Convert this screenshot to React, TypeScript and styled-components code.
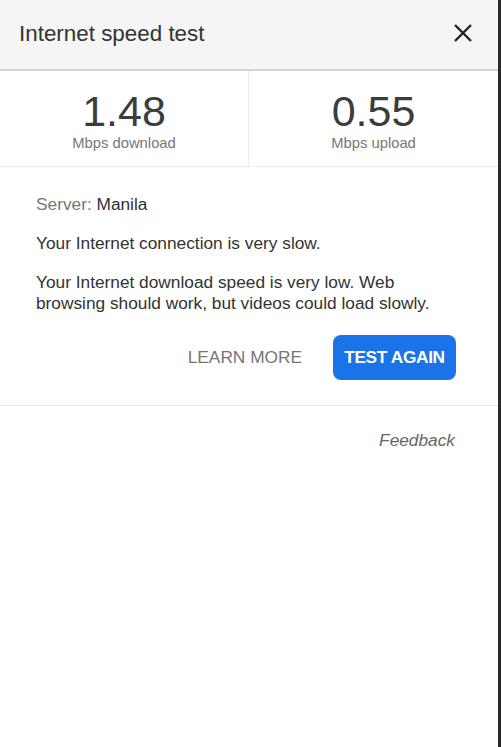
import React from "react";
import styled, { createGlobalStyle } from "styled-components";

const Global = createGlobalStyle`
  html, body { margin: 0; padding: 0; background: #fff; }
  body { font-family: "Liberation Sans", Arial, sans-serif; }
`;

const Frame = styled.div`
  display: flex;
  width: 501px;
  height: 747px;
`;

const Panel = styled.div`
  flex: 1;
  background: #fff;
  display: flex;
  flex-direction: column;
`;

const Edge = styled.div`
  width: 3px;
  background: #2a2a2a;
`;

const Header = styled.div`
  height: 69px;
  background: #f5f5f5;
  border-bottom: 2px solid #d4d4d4;
  display: flex;
  align-items: center;
  justify-content: space-between;
  padding: 0 25px 0 19px;
`;

const Title = styled.div`
  font-size: 22.4px;
  color: #333;
  padding-bottom: 2px;
`;

const Close = styled.button`
  border: none;
  background: none;
  padding: 0;
  width: 20px;
  height: 20px;
  display: flex;
  margin-bottom: 3px;
  cursor: pointer;
`;

const Stats = styled.div`
  display: grid;
  grid-template-columns: 1fr 1fr;
  border-bottom: 1px solid #ebebeb;
  height: 95px;
`;

const Stat = styled.div<{ $divider?: boolean }>`
  display: flex;
  flex-direction: column;
  align-items: center;
  padding-top: 18px;
  border-right: ${(p) => (p.$divider ? "1px solid #ebebeb" : "none")};
`;

const Value = styled.div`
  font-size: 43px;
  line-height: 44px;
  color: #3c3c3c;
`;

const Unit = styled.div`
  font-size: 14.8px;
  color: #777;
  margin-top: 2px;
`;

const Body = styled.div`
  padding: 27px 42px 25px 36px;
  border-bottom: 1px solid #ebebeb;
  display: flex;
  flex-direction: column;
`;

const Line = styled.p<{ $gap?: number }>`
  margin: 0 0 ${(p) => p.$gap ?? 0}px;
  font-size: 17.3px;
  line-height: 21px;
  color: #333;
`;

const Muted = styled.span`
  color: #777;
`;

const Actions = styled.div`
  display: flex;
  justify-content: flex-end;
  align-items: center;
  gap: 31px;
  margin-top: 21px;
`;

const TextButton = styled.button`
  border: none;
  background: none;
  padding: 0;
  font-family: inherit;
  font-size: 17.3px;
  color: #757575;
  text-transform: uppercase;
  cursor: pointer;
`;

const PrimaryButton = styled.button`
  border: none;
  background: #1a73e8;
  color: #fff;
  font-family: inherit;
  font-size: 17.3px;
  font-weight: bold;
  letter-spacing: -0.35px;
  height: 45px;
  width: 123px;
  padding: 0;
  border-radius: 8px;
  text-transform: uppercase;
  cursor: pointer;
`;

const Footer = styled.div`
  display: flex;
  justify-content: flex-end;
  padding: 24px 43px 0 0;
`;

const Feedback = styled.a`
  font-size: 17.3px;
  font-style: italic;
  color: #666;
`;

export default function App() {
  return (
    <>
      <Global />
      <Frame>
        <Panel>
          <Header>
            <Title>Internet speed test</Title>
            <Close aria-label="Close">
              <svg width="20" height="20" viewBox="0 0 20 20">
                <path d="M2 2L18 18M18 2L2 18" stroke="#222" strokeWidth="2.4" strokeLinecap="butt" />
              </svg>
            </Close>
          </Header>
          <Stats>
            <Stat $divider>
              <Value>1.48</Value>
              <Unit>Mbps download</Unit>
            </Stat>
            <Stat>
              <Value>0.55</Value>
              <Unit>Mbps upload</Unit>
            </Stat>
          </Stats>
          <Body>
            <Line $gap={18}>
              <Muted>Server:</Muted> Manila
            </Line>
            <Line $gap={18}>Your Internet connection is very slow.</Line>
            <Line>
              Your Internet download speed is very low. Web browsing should work, but videos could load slowly.
            </Line>
            <Actions>
              <TextButton>Learn more</TextButton>
              <PrimaryButton>Test again</PrimaryButton>
            </Actions>
          </Body>
          <Footer>
            <Feedback>Feedback</Feedback>
          </Footer>
        </Panel>
        <Edge />
      </Frame>
    </>
  );
}
